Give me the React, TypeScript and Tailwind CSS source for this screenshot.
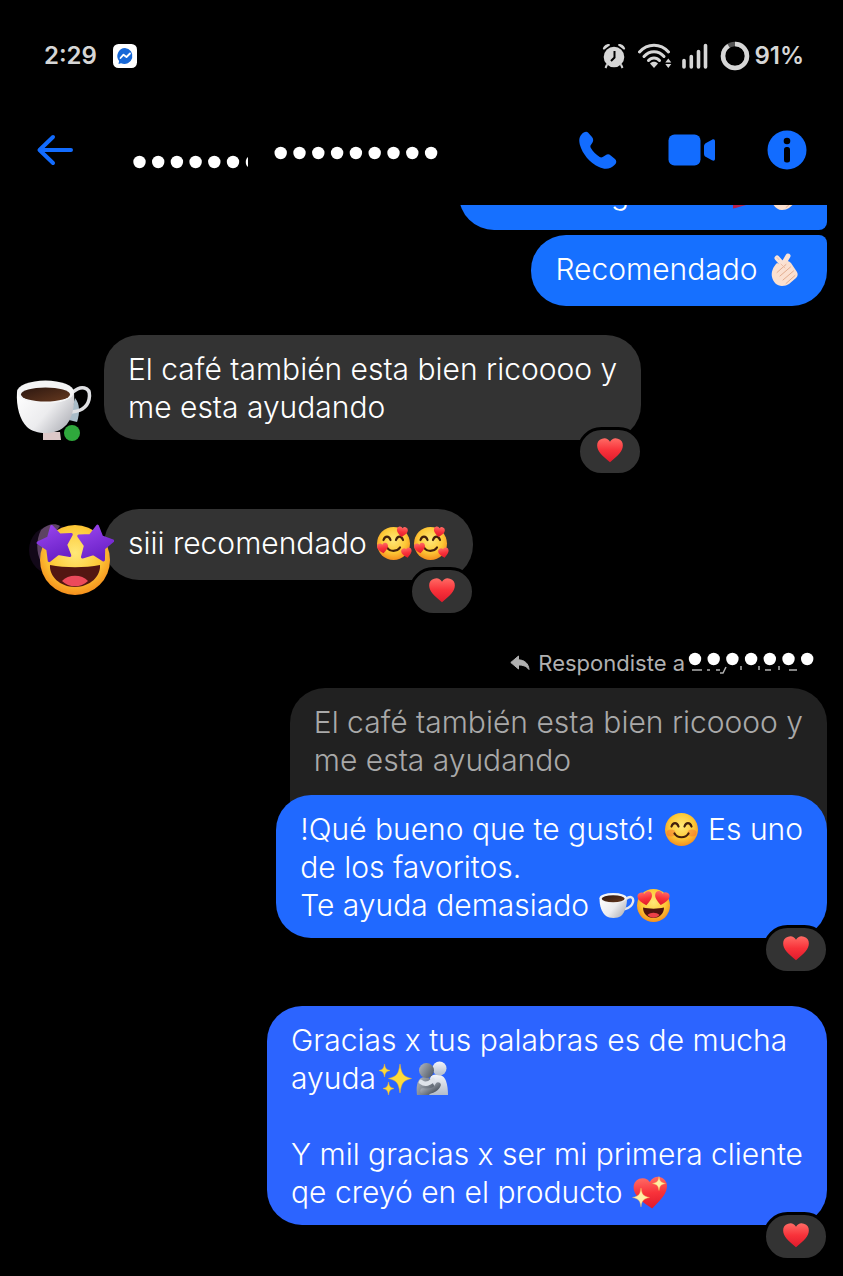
import type { ReactNode } from "react";
import clsx from "clsx";

const HEART =
  "M12 22.5C5 17 1 12.8 1 8.2A5.9 5.9 0 0 1 12 5a5.9 5.9 0 0 1 11 3.2c0 4.6-4 8.8-11 14.3z";

const starPoints = (cx: number, cy: number, r: number, turn: number) =>
  Array.from({ length: 10 }, (_, i) => {
    const angle = ((i * 36 + turn - 90) * Math.PI) / 180;
    const radius = i % 2 === 0 ? r : r * 0.54;
    return `${cx + radius * Math.cos(angle)},${cy + radius * Math.sin(angle)}`;
  }).join(" ");

// gradients shared by all the emoji
const Gradients = () => (
  <svg className="absolute h-0 w-0" aria-hidden="true">
    <defs>
      <radialGradient id="face" cx="0.5" cy="0.4" r="0.62">
        <stop offset="0" stopColor="#ffe878" />
        <stop offset="0.6" stopColor="#fdc937" />
        <stop offset="1" stopColor="#f58a1a" />
      </radialGradient>
      <linearGradient id="heart" x1="0" y1="0" x2="0" y2="1">
        <stop offset="0" stopColor="#ff6a64" />
        <stop offset="0.5" stopColor="#f8323a" />
        <stop offset="1" stopColor="#e01a2c" />
      </linearGradient>
      <linearGradient id="cup" x1="0" y1="0" x2="1" y2="0.6">
        <stop offset="0" stopColor="#ffffff" />
        <stop offset="0.6" stopColor="#ececee" />
        <stop offset="1" stopColor="#b9bac0" />
      </linearGradient>
      <linearGradient id="coffee" x1="0" y1="0" x2="1" y2="1">
        <stop offset="0" stopColor="#2c1710" />
        <stop offset="1" stopColor="#66391f" />
      </linearGradient>
      <linearGradient id="purple" x1="0" y1="0" x2="0.4" y2="1">
        <stop offset="0" stopColor="#9a45ee" />
        <stop offset="1" stopColor="#6b22c8" />
      </linearGradient>
      <linearGradient id="hugLight" x1="0" y1="0" x2="0" y2="1">
        <stop offset="0" stopColor="#f3f5fa" />
        <stop offset="1" stopColor="#b3bccb" />
      </linearGradient>
      <linearGradient id="hugDark" x1="0" y1="0" x2="1" y2="0.6">
        <stop offset="0" stopColor="#b4bac4" />
        <stop offset="1" stopColor="#59616c" />
      </linearGradient>
    </defs>
  </svg>
);

const Emoji = ({ label, children }: { label: string; children: ReactNode }) => (
  <svg
    role="img"
    aria-label={label}
    viewBox="0 0 37 37"
    className="-my-2 inline-block h-[37px] w-[37px] align-baseline"
  >
    {children}
  </svg>
);

const FingerHeart = () => (
  <Emoji label="finger heart">
    <path d="M11 7l8 9M22 5l-7 12" stroke="#fbe3d6" strokeWidth="5" strokeLinecap="round" />
    <path
      d="M11 12c-4 4-6 9-5 14 1 5 5 9 10 9 3 0 5-1 7-2l7-6c2-2 2-4 1-6l-6-9c-2-2-4-3-6-1l-3 3z"
      fill="#fbe0d0"
    />
    <path
      d="M11 21.500l9-8M14 25l10.500-9M17 29l10.500-9M20 32.500l9-8"
      stroke="#e3ad8f"
      strokeWidth="1"
      strokeLinecap="round"
    />
    <path d="M15 13l4 4M11 6.500l2 2.200" stroke="#e9b89f" strokeWidth="0.800" strokeLinecap="round" />
  </Emoji>
);

const NailHand = () => (
  <Emoji label="hand">
    <path d="M4 28.500c6-2 18-2.500 27-3l-12 4C13 31 8 33 4 33.500z" fill="#b81f4a" />
  </Emoji>
);

const Smile = () => (
  <Emoji label="smiling face">
    <circle cx="18.500" cy="18.500" r="16.500" fill="url(#face)" />
    <ellipse cx="8" cy="22" rx="4.500" ry="3.500" fill="#f4682f" opacity="0.450" />
    <ellipse cx="29" cy="22" rx="4.500" ry="3.500" fill="#f4682f" opacity="0.450" />
    <path
      d="M8.500 15.500c1.500-4.500 5.500-4.500 7 0M21.500 15.500c1.500-4.500 5.500-4.500 7 0M11.500 22.500c3 5 11 5 14 0"
      fill="none"
      stroke="#42200c"
      strokeWidth="2.200"
      strokeLinecap="round"
    />
  </Emoji>
);

const Adoring = () => (
  <Emoji label="smiling face with hearts">
    <circle cx="18.500" cy="18.500" r="16.500" fill="url(#face)" />
    <path
      d="M8.500 15c1.500-4.500 5.500-4.500 7 0M21 15c1.500-4.500 5.500-4.500 7 0M12 22.500c3 4.500 10 4.500 13 0"
      fill="none"
      stroke="#42200c"
      strokeWidth="2.200"
      strokeLinecap="round"
    />
    <path d={HEART} fill="url(#heart)" transform="translate(22 0) rotate(8) scale(.5)" />
    <path d={HEART} fill="url(#heart)" transform="translate(1 18) rotate(-8) scale(.5)" />
    <path d={HEART} fill="url(#heart)" transform="translate(25 23) rotate(-10) scale(.48)" />
  </Emoji>
);

const HeartEyes = () => (
  <Emoji label="heart eyes">
    <circle cx="18.500" cy="18.500" r="16.500" fill="url(#face)" />
    <path d="M8 20.500c6 1.500 15 1.500 21 0 0 6-4.500 10.500-10.500 10.500S8 26.500 8 20.500z" fill="#4f140f" />
    <path d="M12.500 28c3-3 9-3 12 0-3.500 3.500-8.500 3.500-12 0z" fill="#ee4148" />
    <path d={HEART} fill="url(#heart)" transform="translate(1 5) rotate(-10) scale(.66)" />
    <path d={HEART} fill="url(#heart)" transform="translate(20.500 2) rotate(10) scale(.66)" />
  </Emoji>
);

const Coffee = () => (
  <Emoji label="coffee">
    <path
      d="M28 12c5-4 8-1 7 3-1 4-4 6-8 7"
      fill="none"
      stroke="#e6e7ea"
      strokeWidth="2.400"
      strokeLinecap="round"
    />
    <path d="M1.500 11h27.500c0 8-2 14-6 18-3 2.500-12 2.500-15 0-4.500-4-6.500-10-6.500-18z" fill="url(#cup)" />
    <ellipse cx="15.200" cy="11" rx="13.700" ry="5" fill="#f4f4f5" />
    <ellipse cx="15.200" cy="11.800" rx="11.500" ry="3.500" fill="url(#coffee)" />
  </Emoji>
);

const Sparkles = () => (
  <Emoji label="sparkles">
    <g fill="#fddb3a" stroke="#f3b52a" strokeWidth="0.500">
      <path d="M24 4c1.500 10 3 12.500 11.500 14.500C27 20.500 25.500 23 24 33c-1.500-10-3-12.500-11.500-14.500C21 16.500 22.500 14 24 4z" />
      <path d="M8.500 4c.8 4.500 1.500 5.500 5.500 6.500-4 1-4.700 2-5.500 6.500C7.700 12.500 7 11.500 3 10.500 7 9.500 7.700 8.500 8.500 4z" />
      <path d="M12.500 22c.8 4.500 1.500 5.500 5.500 6.500-4 1-4.700 2-5.500 6.500-.8-4.500-1.500-5.500-5.500-6.500 4-1 4.700-2 5.500-6.500z" />
    </g>
  </Emoji>
);

const Hug = () => (
  <Emoji label="people hugging">
    <path d="M18 16c7-3 13-1 15 5 1.500 4 2 9 2 14H11z" fill="url(#hugLight)" />
    <circle cx="26.500" cy="8.500" r="7" fill="url(#hugLight)" />
    <path d="M4 35c-1-8 0-14 4-17 4-2 8-1 10 2l4 7-6 8z" fill="url(#hugDark)" />
    <circle cx="13.500" cy="10.500" r="7.500" fill="url(#hugDark)" />
    <path
      d="M10 31c7 1 13-1 15-6"
      fill="none"
      stroke="url(#hugDark)"
      strokeWidth="5.500"
      strokeLinecap="round"
    />
    <path
      d="M8 22c4 3 8 2 12-2"
      fill="none"
      stroke="#dfe3ea"
      strokeWidth="4.500"
      strokeLinecap="round"
    />
  </Emoji>
);

const SparklingHeart = () => (
  <Emoji label="sparkling heart">
    <path d={HEART} fill="url(#heart)" transform="translate(0 2) rotate(-5) scale(1.520)" />
    <g fill="#fff0a8" stroke="#f7b64a" strokeWidth="0.400">
      <path d="M10 14c1 6.500 2 8 8.500 9.500-6.500 1.500-7.500 3-8.500 9.500-1-6.500-2-8-8.500-9.500C8 22 9 20.500 10 14z" />
      <path d="M28 2.500c.8 4.500 1.500 6 6.500 7-5 1-5.700 2.500-6.500 7-.8-4.500-1.500-6-6.500-7 5-1 5.700-2.500 6.500-7z" />
    </g>
  </Emoji>
);

const CoffeeAvatar = () => (
  <svg
    viewBox="0 0 76 62"
    className="absolute -bottom-0.5 left-0 h-[62px] w-[76px]"
    aria-hidden="true"
  >
    <path d="M27 52h17l1 8H27z" fill="#dcc8c8" />
    <path d="M59 18c5 6 5 15 2 24l-8-2z" fill="#a9bcc8" />
    <path
      d="M57 12c8-7 17-5 16.500 4-.5 9-6.500 15-18 16"
      fill="none"
      stroke="#dfe0e3"
      strokeWidth="3.500"
      strokeLinecap="round"
    />
    <path d="M1 12h57c1 15-2 29-10 35-9 8-28 8-37 0C4 40 0 27 1 12z" fill="url(#cup)" />
    <ellipse cx="29.500" cy="12" rx="28.500" ry="11.500" fill="#f4f4f5" />
    <ellipse cx="29.500" cy="14.500" rx="24.500" ry="7" fill="url(#coffee)" />
    <circle cx="56" cy="53" r="8" fill="#2fa83c" />
  </svg>
);

const StarAvatar = () => (
  <svg
    viewBox="0 0 86 76"
    className="absolute -bottom-4 left-3 z-10 h-[76px] w-[86px]"
    aria-hidden="true"
  >
    <circle cx="26" cy="30" r="25" fill="#120818" />
    <path d="M13 10c6-6 14-7 19-4L20 22l-7 20c-5-10-5-22 0-32z" fill="#5d4363" />
    <circle cx="47" cy="40" r="35" fill="url(#face)" />
    <path d="M22 45c15 3 35 3 50 0 1 11-10 22-25 22S21 56 22 45z" fill="#531612" />
    <path d="M34 61c6-7 20-7 26 0-7 7-19 7-26 0z" fill="#ec4a5b" />
    <g fill="url(#purple)" stroke="url(#purple)" strokeWidth="3" strokeLinejoin="round">
      <polygon points={starPoints(28, 24, 18, -14)} />
      <polygon points={starPoints(67, 24, 18, 8)} />
    </g>
  </svg>
);

const Reaction = () => (
  <button
    type="button"
    aria-label="Reacciones"
    className="absolute -right-0.5 -bottom-9 box-content flex h-[43px] w-[60px] items-center justify-center rounded-full border-3 border-black bg-[#333333]"
  >
    <svg viewBox="0 0 24 24" className="-mt-1 h-7 w-7" aria-hidden="true">
      <path d={HEART} fill="url(#heart)" />
    </svg>
  </button>
);

type BubbleProps = {
  className: string;
  reacted?: boolean;
  children: ReactNode;
};

const Bubble = ({ className, reacted, children }: BubbleProps) => (
  <div
    className={clsx(
      "relative min-h-[71px] w-fit px-6 pt-[15px] pb-[14px] text-[30px] leading-[38px] font-[350]",
      className,
    )}
  >
    <p>{children}</p>
    {reacted && <Reaction />}
  </div>
);

const StatusBar = () => (
  <div className="flex h-[112px] items-center justify-between pr-[39px] pl-11 text-2xl font-semibold text-[#d6d6d6]">
    <div className="flex items-center gap-4">
      <span>2:29</span>
      <svg viewBox="0 0 24 24" className="h-6 w-6" aria-hidden="true">
        <rect width="24" height="24" rx="5.500" fill="#fff" />
        <path d="M12 4a8 8 0 1 1-4 15.200L5.500 20l.6-3A8 8 0 0 1 12 4z" fill="#1768d8" />
        <path
          d="m7.500 14 3-3.300 3 2.300 3.500-3.500"
          fill="none"
          stroke="#fff"
          strokeWidth="1.800"
          strokeLinecap="round"
          strokeLinejoin="round"
        />
      </svg>
    </div>

    <div className="flex items-center">
      {/* alarm */}
      <svg viewBox="0 0 24 26" className="mr-3 h-[26px] w-6" aria-hidden="true">
        <circle cx="12" cy="14" r="10.300" fill="currentColor" />
        <path
          d="M.8 6C1.300 3 4 .8 7.500 1L8 2.200 2 6.800zM23.200 6C22.700 3 20 .8 16.500 1L16 2.200l6 4.600z"
          fill="currentColor"
        />
        <path d="m5 21.500-1.500 3.500M19 21.500l1.500 3.500" stroke="currentColor" strokeWidth="2" />
        <path d="M12.500 8v6.500L9 18" fill="none" stroke="#000" strokeWidth="2" />
      </svg>
      {/* wifi */}
      <svg viewBox="0 0 34 26" className="mr-2.5 h-[26px] w-[34px]" aria-hidden="true">
        <g fill="none" stroke="currentColor" strokeWidth="3" strokeLinecap="round">
          <path d="M1.500 9c8-9 21-9 29 0" />
          <path d="M6 13.500c5.500-6.500 14.500-6.500 20 0" />
          <path d="M10.500 17.500c3-3.500 8-3.500 11 0" />
        </g>
        <path d="M12 20.500c2-2.500 6-2.500 8 0l-4 4.500z" fill="currentColor" />
        <path d="m30.300 15.500 3 4h-6zM30.300 25l3-4h-6z" fill="currentColor" />
      </svg>
      {/* signal */}
      <svg viewBox="0 0 26 26" className="mr-3 h-[26px] w-[26px]" aria-hidden="true">
        <path
          d="M2 17.500V24M9.300 13.500V24M16.500 8.500V24M23.500 2.500V24"
          stroke="currentColor"
          strokeWidth="3.600"
          strokeLinecap="round"
        />
      </svg>
      {/* battery */}
      <svg viewBox="0 0 30 30" className="mr-1 h-[30px] w-[30px]" aria-hidden="true">
        <circle cx="15" cy="15" r="12" fill="none" stroke="#555" strokeWidth="4.500" />
        <circle
          cx="15"
          cy="15"
          r="12"
          fill="none"
          stroke="currentColor"
          strokeWidth="4.500"
          strokeDasharray="91 9"
          pathLength="100"
          transform="rotate(-90 15 15)"
        />
      </svg>
      <span>91%</span>
    </div>
  </div>
);

const Header = () => (
  <header className="mb-[17px] flex h-[76px] items-center px-9 text-[#126cff]">
    <button type="button" aria-label="Atrás">
      <svg viewBox="0 0 38 32" className="h-8 w-[38px]" aria-hidden="true">
        <path
          d="M35 16H4M17 3 3.500 16 17 29"
          fill="none"
          stroke="currentColor"
          strokeWidth="4"
          strokeLinecap="round"
          strokeLinejoin="round"
        />
      </svg>
    </button>

    {/* hidden contact name */}
    <svg viewBox="0 0 308 58" className="ml-[58px] h-[58px] w-[308px]" aria-hidden="true">
      <g fill="#fff">
        {Array.from({ length: 6 }, (_, i) => (
          <circle key={i} cx={7.5 + i * 18.7} cy="41" r="6.200" />
        ))}
        <path d="M116 36c-3 2-3 8 0 10z" />
        {Array.from({ length: 9 }, (_, i) => (
          <circle key={i} cx={148.7 + i * 18.8} cy="32" r="6.200" />
        ))}
      </g>
    </svg>

    <nav className="ml-auto flex items-center gap-[51px]">
      <button type="button" aria-label="Llamar">
        <svg viewBox="0 0 38 38" className="h-[38px] w-[38px]" aria-hidden="true">
          <path
            d="M2.500 3.500C4.500 1 7.500 0 9 1.500l4 4.500c1.500 2 1.500 3.500.5 5.500l-1.800 2.800c-.5 1-.4 1.800.2 2.700 2.300 3.800 5 6.500 8.800 9 1 .6 2 .6 3 0l2.800-1.800c2-1.200 3.500-1.200 5.200.3l4.300 3.600c2 1.800 1.500 4-.5 6-3.500 4-9.500 5-15.500 2C10.500 31.500 3.500 23 .8 13.500-.3 9 .3 6 2.500 3.500z"
            fill="currentColor"
          />
        </svg>
      </button>
      <button type="button" aria-label="Videollamada">
        <svg viewBox="0 0 48 32" className="h-8 w-12" aria-hidden="true">
          <rect x="0.500" y="0.500" width="32" height="31" rx="6" fill="currentColor" />
          <path
            d="M36 12.500c0-1.500.5-2.500 1.600-3.300l6.400-3.500c1.700-1 3-.2 3 1.500v17.600c0 1.700-1.300 2.500-3 1.500l-6.400-3.500c-1.100-.8-1.600-1.800-1.600-3.300z"
            fill="currentColor"
          />
        </svg>
      </button>
      <button type="button" aria-label="Información">
        <svg viewBox="0 0 40 40" className="h-10 w-10" aria-hidden="true">
          <circle cx="20" cy="20" r="19.500" fill="currentColor" />
          <circle cx="20" cy="11" r="3.300" fill="#000" />
          <rect x="17" y="17" width="6" height="15.500" rx="2.500" fill="#000" />
        </svg>
      </button>
    </nav>
  </header>
);

const App = () => {
  return (
    <div className="min-h-screen w-full overflow-x-hidden bg-black font-['Inter',sans-serif] text-white">
      <Gradients />
      <StatusBar />
      <Header />

      <main className="flex flex-col px-4 pb-[52px]">
        {/* message scrolled under the header */}
        <div className="flex h-[25px] items-end justify-end overflow-hidden">
          <Bubble className="rounded-[35px] rounded-br-lg bg-[#1670ff]">
            <span className="mr-[100px] ml-[128px]">g</span>
            <NailHand />
            <FingerHeart />
          </Bubble>
        </div>
        <Bubble className="mt-[5px] self-end rounded-[35px] rounded-tr-lg bg-[#1670ff]">
          Recomendado <FingerHeart />
        </Bubble>

        <div className="mt-[29px] flex items-end">
          <div className="relative w-[88px] shrink-0">
            <CoffeeAvatar />
          </div>
          <Bubble reacted className="rounded-[35px] bg-[#333333]">
            El café también esta bien ricoooo y
            <br />
            me esta ayudando
          </Bubble>
        </div>

        <div className="mt-[69px] flex items-end">
          <div className="relative w-[88px] shrink-0">
            <StarAvatar />
          </div>
          <Bubble reacted className="rounded-[35px] bg-[#333333]">
            siii recomendado <Adoring />
            <Adoring />
          </Bubble>
        </div>

        {/* reply */}
        <div className="mt-[67px] flex h-8 items-center self-end pr-3 text-[22px] text-[#b0b0b0]">
          <svg viewBox="0 0 20 16" className="mr-2 h-4 w-5" aria-hidden="true">
            <path
              d="M8.500 1v3.800c6 .2 10 3.700 10.500 9.700-3-3.500-6-4.500-10.500-4.500v4L.8 7.500z"
              fill="currentColor"
              stroke="currentColor"
              strokeLinejoin="round"
            />
          </svg>
          <span>Respondiste a</span>
          <svg viewBox="0 0 130 32" className="h-8 w-[130px]" aria-hidden="true">
            <path
              d="M7 23h10M22 23h3M31 23h4M41 20l-3 6h-3M56 19v4M74 19v4M80 23h6M94 19v4M104 23h8"
              fill="none"
              stroke="currentColor"
              strokeWidth="1.500"
            />
            {Array.from({ length: 7 }, (_, i) => (
              <circle key={i} cx={10 + i * 18.7} cy="12" r="6.200" fill="#fff" />
            ))}
          </svg>
        </div>
        <Bubble className="mt-[9px] self-end rounded-t-[35px] bg-[#212121] pb-[51px] text-[#a9a9a9]">
          El café también esta bien ricoooo y
          <br />
          me esta ayudando
        </Bubble>
        <Bubble reacted className="-mt-[35px] self-end rounded-[35px] bg-[#2069ff]">
          !Qué bueno que te gustó! <Smile /> Es uno
          <br />
          de los favoritos.
          <br />
          Te ayuda demasiado <Coffee />
          <HeartEyes />
        </Bubble>

        <Bubble reacted className="mt-[68px] self-end rounded-[35px] bg-[#2c64ff]">
          Gracias x tus palabras es de mucha
          <br />
          ayuda
          <Sparkles />
          <Hug />
          <br />
          <br />Y mil gracias x ser mi primera cliente
          <br />
          qe creyó en el producto <SparklingHeart />
        </Bubble>
      </main>
    </div>
  );
};

export default App;
